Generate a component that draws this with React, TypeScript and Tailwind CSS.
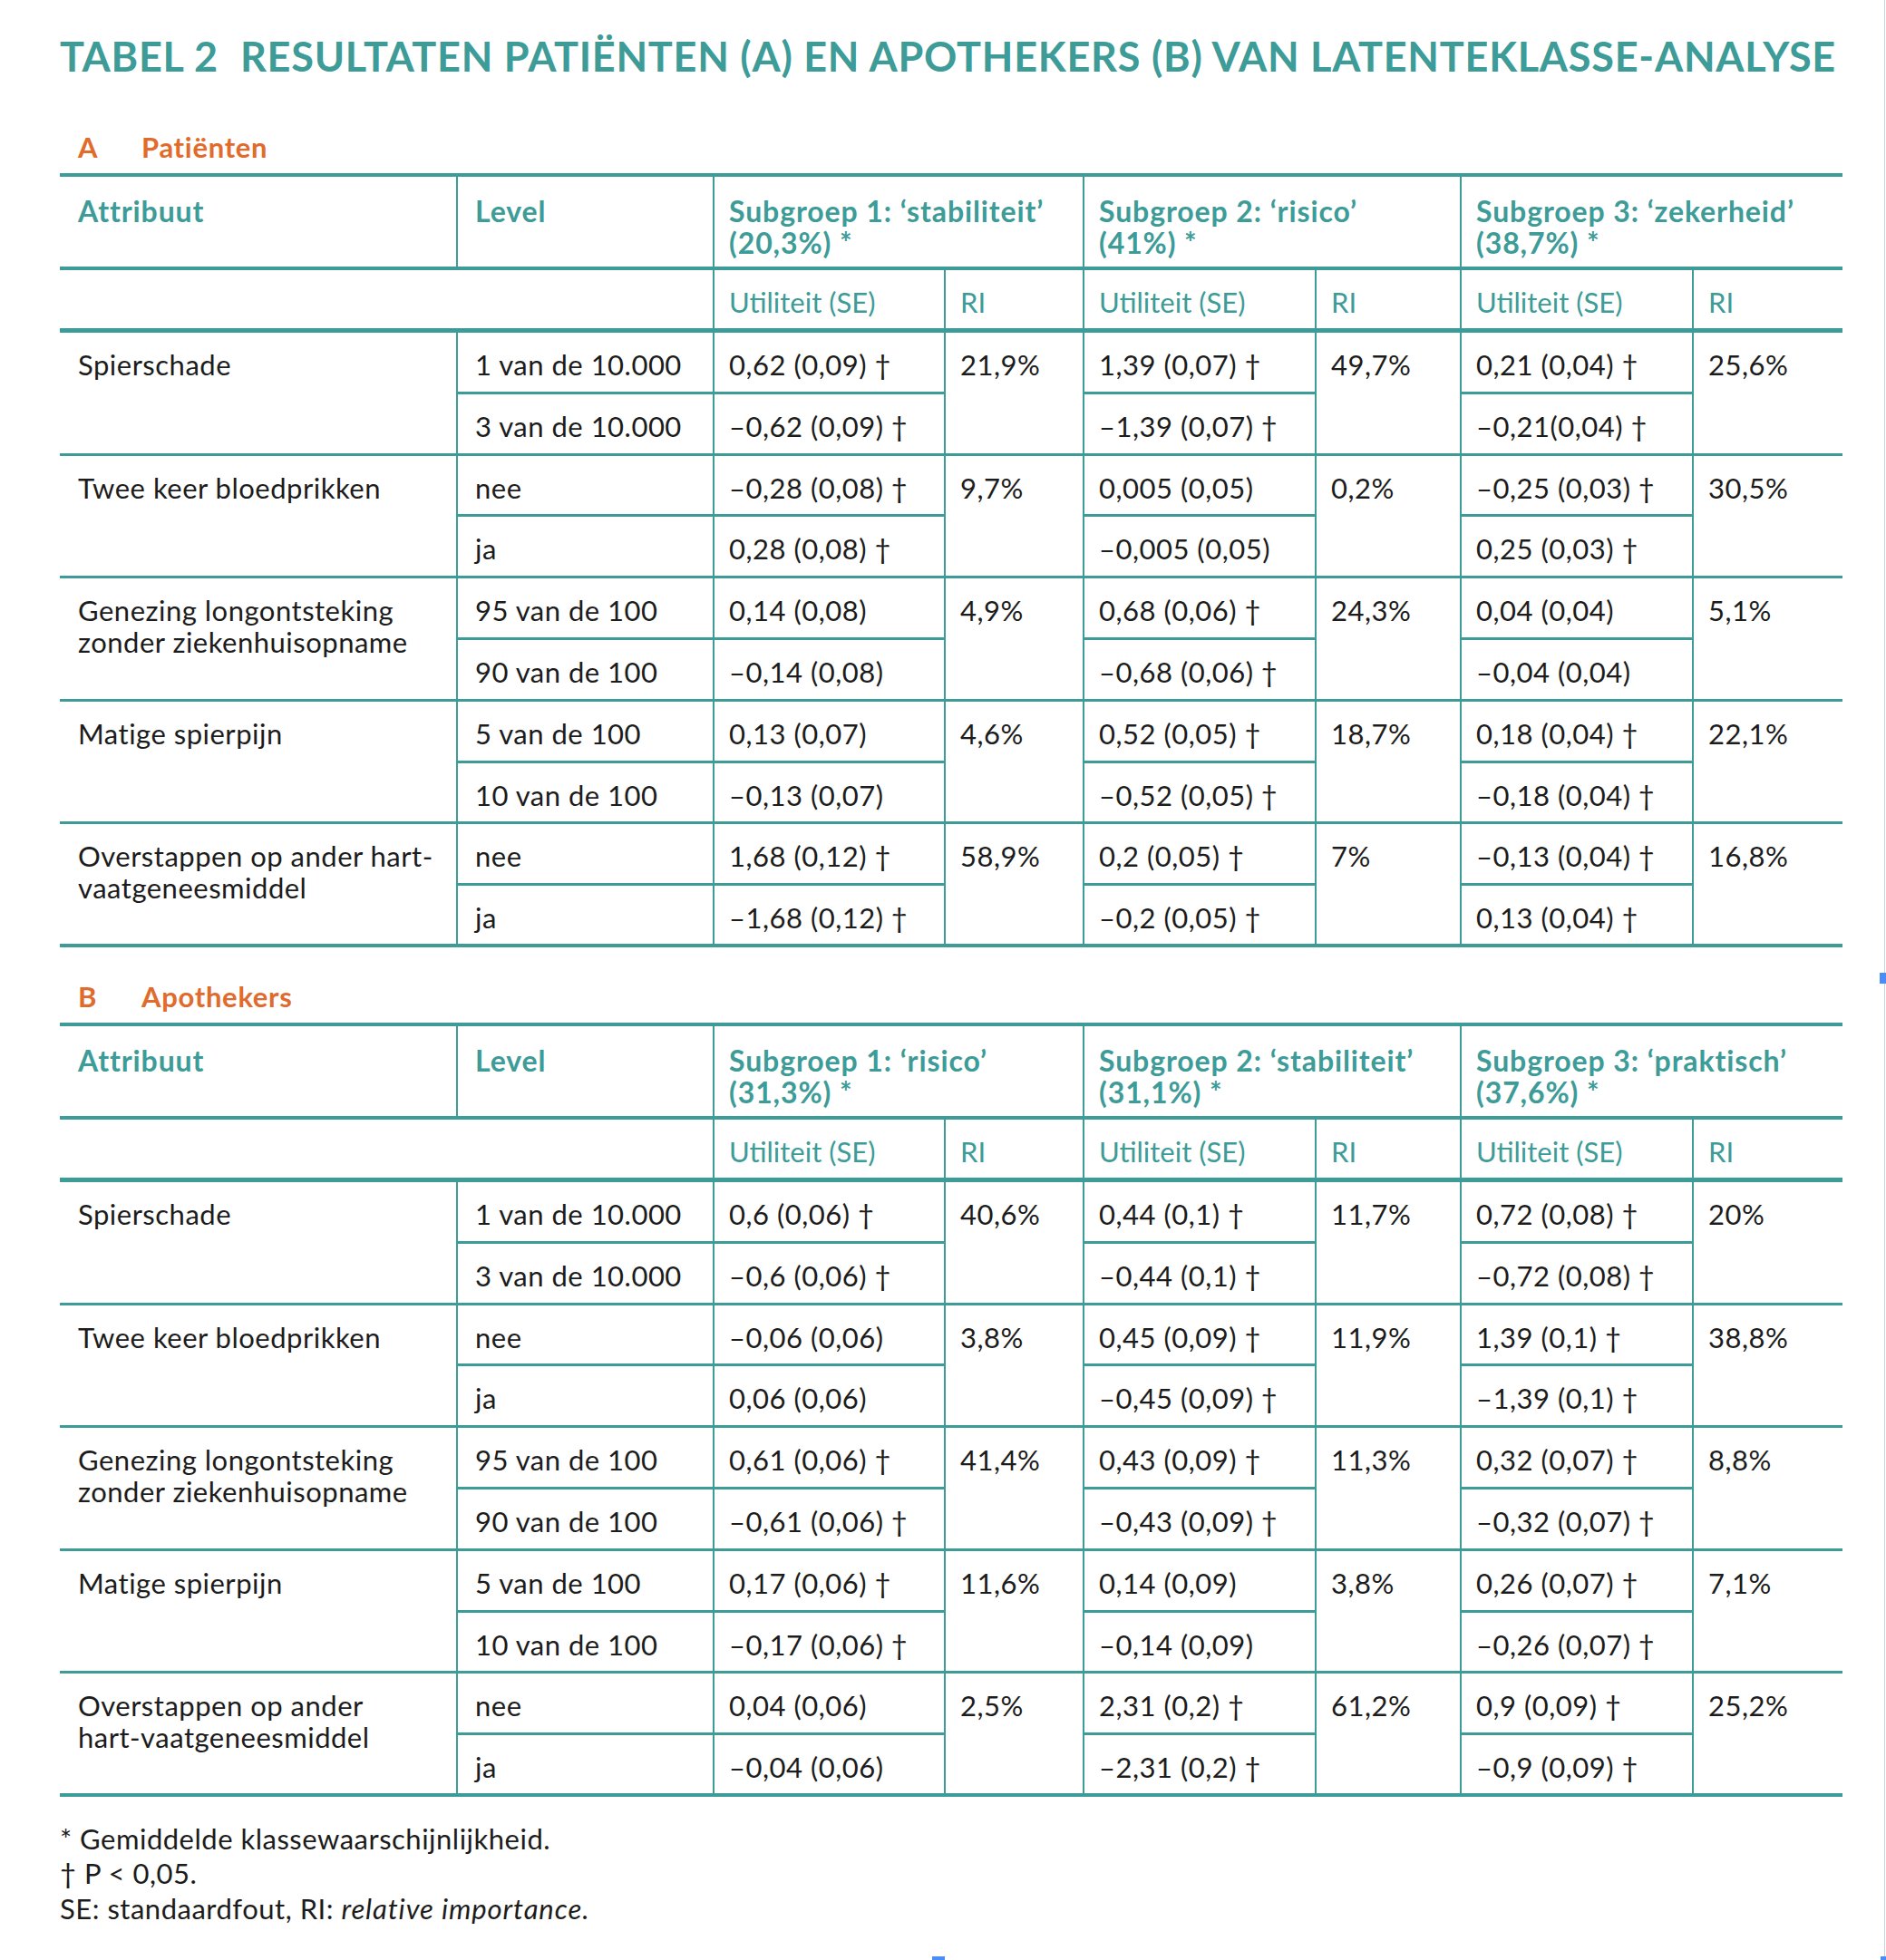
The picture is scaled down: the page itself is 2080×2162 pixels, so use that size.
import type { ReactNode } from "react";

interface Sub {
  u: [string, string];
  ri: string;
}

interface Group {
  attr: ReactNode;
  levels: [string, string];
  subs: [Sub, Sub, Sub];
}

interface Section {
  letter: string;
  label: string;
  heads: [ReactNode, ReactNode, ReactNode];
  groups: Group[];
}

const sections: Section[] = [
  {
    letter: "A",
    label: "Patiënten",
    heads: [
      <>Subgroep 1: ‘stabiliteit’<br />(20,3%) *</>,
      <>Subgroep 2: ‘risico’<br />(41%) *</>,
      <>Subgroep 3: ‘zekerheid’<br />(38,7%) *</>,
    ],
    groups: [
      {
        attr: "Spierschade",
        levels: ["1 van de 10.000", "3 van de 10.000"],
        subs: [
          { u: ["0,62 (0,09) †", "–0,62 (0,09) †"], ri: "21,9%" },
          { u: ["1,39 (0,07) †", "–1,39 (0,07) †"], ri: "49,7%" },
          { u: ["0,21 (0,04) †", "–0,21(0,04) †"], ri: "25,6%" },
        ],
      },
      {
        attr: "Twee keer bloedprikken",
        levels: ["nee", "ja"],
        subs: [
          { u: ["–0,28 (0,08) †", "0,28 (0,08) †"], ri: "9,7%" },
          { u: ["0,005 (0,05)", "–0,005 (0,05)"], ri: "0,2%" },
          { u: ["–0,25 (0,03) †", "0,25 (0,03) †"], ri: "30,5%" },
        ],
      },
      {
        attr: <>Genezing longontsteking<br />zonder ziekenhuisopname</>,
        levels: ["95 van de 100", "90 van de 100"],
        subs: [
          { u: ["0,14 (0,08)", "–0,14 (0,08)"], ri: "4,9%" },
          { u: ["0,68 (0,06) †", "–0,68 (0,06) †"], ri: "24,3%" },
          { u: ["0,04 (0,04)", "–0,04 (0,04)"], ri: "5,1%" },
        ],
      },
      {
        attr: "Matige spierpijn",
        levels: ["5 van de 100", "10 van de 100"],
        subs: [
          { u: ["0,13 (0,07)", "–0,13 (0,07)"], ri: "4,6%" },
          { u: ["0,52 (0,05) †", "–0,52 (0,05) †"], ri: "18,7%" },
          { u: ["0,18 (0,04) †", "–0,18 (0,04) †"], ri: "22,1%" },
        ],
      },
      {
        attr: <>Overstappen op ander hart-<br />vaatgeneesmiddel</>,
        levels: ["nee", "ja"],
        subs: [
          { u: ["1,68 (0,12) †", "–1,68 (0,12) †"], ri: "58,9%" },
          { u: ["0,2 (0,05) †", "–0,2 (0,05) †"], ri: "7%" },
          { u: ["–0,13 (0,04) †", "0,13 (0,04) †"], ri: "16,8%" },
        ],
      },
    ],
  },
  {
    letter: "B",
    label: "Apothekers",
    heads: [
      <>Subgroep 1: ‘risico’<br />(31,3%) *</>,
      <>Subgroep 2: ‘stabiliteit’<br />(31,1%) *</>,
      <>Subgroep 3: ‘praktisch’<br />(37,6%) *</>,
    ],
    groups: [
      {
        attr: "Spierschade",
        levels: ["1 van de 10.000", "3 van de 10.000"],
        subs: [
          { u: ["0,6 (0,06) †", "–0,6 (0,06) †"], ri: "40,6%" },
          { u: ["0,44 (0,1) †", "–0,44 (0,1) †"], ri: "11,7%" },
          { u: ["0,72 (0,08) †", "–0,72 (0,08) †"], ri: "20%" },
        ],
      },
      {
        attr: "Twee keer bloedprikken",
        levels: ["nee", "ja"],
        subs: [
          { u: ["–0,06 (0,06)", "0,06 (0,06)"], ri: "3,8%" },
          { u: ["0,45 (0,09) †", "–0,45 (0,09) †"], ri: "11,9%" },
          { u: ["1,39 (0,1) †", "–1,39 (0,1) †"], ri: "38,8%" },
        ],
      },
      {
        attr: <>Genezing longontsteking<br />zonder ziekenhuisopname</>,
        levels: ["95 van de 100", "90 van de 100"],
        subs: [
          { u: ["0,61 (0,06) †", "–0,61 (0,06) †"], ri: "41,4%" },
          { u: ["0,43 (0,09) †", "–0,43 (0,09) †"], ri: "11,3%" },
          { u: ["0,32 (0,07) †", "–0,32 (0,07) †"], ri: "8,8%" },
        ],
      },
      {
        attr: "Matige spierpijn",
        levels: ["5 van de 100", "10 van de 100"],
        subs: [
          { u: ["0,17 (0,06) †", "–0,17 (0,06) †"], ri: "11,6%" },
          { u: ["0,14 (0,09)", "–0,14 (0,09)"], ri: "3,8%" },
          { u: ["0,26 (0,07) †", "–0,26 (0,07) †"], ri: "7,1%" },
        ],
      },
      {
        attr: <>Overstappen op ander<br />hart-vaatgeneesmiddel</>,
        levels: ["nee", "ja"],
        subs: [
          { u: ["0,04 (0,06)", "–0,04 (0,06)"], ri: "2,5%" },
          { u: ["2,31 (0,2) †", "–2,31 (0,2) †"], ri: "61,2%" },
          { u: ["0,9 (0,09) †", "–0,9 (0,09) †"], ri: "25,2%" },
        ],
      },
    ],
  },
];

const ResultTable = ({ section }: { section: Section }) => {
  const last = section.groups.length - 1;
  return (
    <div className="grid grid-cols-[437px_283px_255px_153px_256px_160px_256px_166px] grid-rows-[107px_69px_repeat(10,67.8px)] w-[1966px] text-[31px] leading-[35px] tracking-[0.5px]">
      {/* Header */}
      <div className="border-y-4 border-[#3d9b98] pl-5 pt-[20px] text-[32px] tracking-[0.9px] font-bold text-[#3d9b98]">Attribuut</div>
      <div className="border-y-4 border-l-2 border-[#3d9b98] pl-[19px] pt-[20px] text-[32px] tracking-[0.9px] font-bold text-[#3d9b98]">Level</div>
      {section.heads.map((h, i) => (
        <div key={i} className="col-span-2 border-y-4 border-l-2 border-[#3d9b98] pl-4 pt-[20px] text-[32px] tracking-[0.9px] font-bold text-[#3d9b98]">
          {h}
        </div>
      ))}

      {/* Sub header */}
      <div className="col-span-2 border-b-[5px] border-[#3d9b98]" />
      {[0, 1, 2].map((i) => (
        <div key={i} className="contents">
          <div className="border-b-[5px] border-l-2 border-[#3d9b98] pl-4 pt-[18px] tracking-normal text-[#3d9b98]">Utiliteit (SE)</div>
          <div className="border-b-[5px] border-l-2 border-[#3d9b98] pl-4 pt-[18px] tracking-normal text-[#3d9b98]">RI</div>
        </div>
      ))}

      {/* Body */}
      {section.groups.map((g, gi) => {
        const bottom = gi === last ? "border-b-4" : "border-b-[3px]";
        return (
          <div key={gi} className="contents">
            <div className={`row-span-2 ${bottom} border-[#3d9b98] pl-5 pt-[18px]`}>{g.attr}</div>
            <div className="border-b-[3px] border-l-2 border-[#3d9b98] pl-[19px] pt-[18px]">{g.levels[0]}</div>
            {g.subs.map((s, si) => (
              <div key={si} className="contents">
                <div className="border-b-[3px] border-l-2 border-[#3d9b98] pl-4 pt-[18px]">{s.u[0]}</div>
                <div className={`row-span-2 ${bottom} border-l-2 border-[#3d9b98] pl-4 pt-[18px]`}>{s.ri}</div>
              </div>
            ))}
            <div className={`${bottom} border-l-2 border-[#3d9b98] pl-[19px] pt-[18px]`}>{g.levels[1]}</div>
            {g.subs.map((s, si) => (
              <div key={si} className={`${bottom} border-l-2 border-[#3d9b98] pl-4 pt-[18px]`}>
                {s.u[1]}
              </div>
            ))}
          </div>
        );
      })}
    </div>
  );
};

export default function App() {
  return (
    <div className="relative w-[2080px] h-[2162px] bg-white font-['Lato',sans-serif] text-[#1c1c1c]">
      <div className="h-full w-[2079px] border-r border-[#c8d3df] px-[66px] pt-[40px]">
        <h1 className="text-[45px] leading-[44px] tracking-[0.75px] font-bold text-[#3d9b98] whitespace-nowrap">
          <span className="mr-[24px]">TABEL 2</span>RESULTATEN PATIËNTEN (A) EN APOTHEKERS (B) VAN LATENTEKLASSE-ANALYSE
        </h1>

        {sections.map((sec, i) => (
          <div key={sec.letter} className={i === 0 ? "mt-[61px]" : "mt-[37px]"}>
            <div className="flex pl-5 mb-[11px] text-[31px] leading-[35px] tracking-[0.7px] font-bold text-[#e06b2c]">
              <span className="w-[70px]">{sec.letter}</span>
              <span>{sec.label}</span>
            </div>
            <ResultTable section={sec} />
          </div>
        ))}

        <div className="mt-[27px] text-[31px] leading-[38.5px] tracking-[0.5px]">
          <p>* Gemiddelde klassewaarschijnlijkheid.</p>
          <p>† P &lt; 0,05.</p>
          <p>
            SE: standaardfout, RI: <em className="tracking-[0.9px]">relative importance.</em>
          </p>
        </div>
      </div>

      {/* viewer selection marks */}
      <span className="absolute left-[2073px] top-[1073px] w-[7px] h-[12px] bg-[#4b8df7]" />
      <span className="absolute left-[1028px] top-[2158px] w-[14px] h-[4px] bg-[#4b8df7]" />
      <span className="absolute left-[2074px] top-[2158px] w-[6px] h-[4px] bg-[#4b8df7]" />
    </div>
  );
}
